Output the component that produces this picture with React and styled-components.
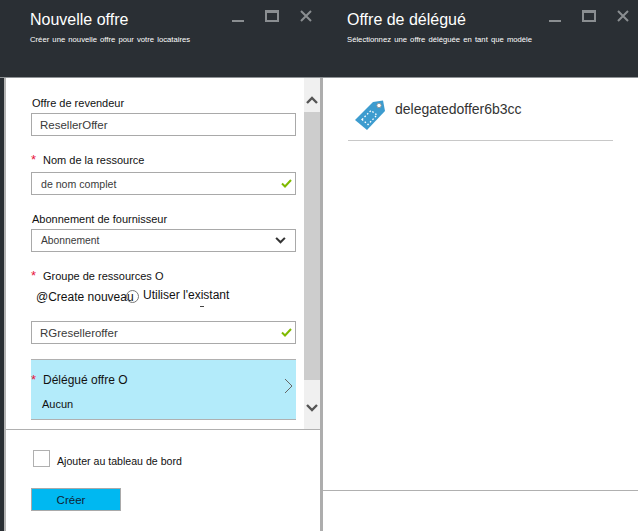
import styled, { createGlobalStyle } from "styled-components";

const GlobalStyle = createGlobalStyle`
  html, body {
    margin: 0;
    padding: 0;
    background: #fff;
  }
  body {
    font-family: "Liberation Sans", Arial, sans-serif;
    color: #222;
  }
`;

const Page = styled.div`
  display: grid;
  grid-template-columns: 322px 316px;
  width: 638px;
  height: 531px;
  overflow: hidden;
`;

const Blade = styled.section`
  display: flex;
  flex-direction: column;
  height: 531px;
  min-width: 0;
  background: ${({ $edge }) => $edge || "#fff"};
`;

const Header = styled.header`
  position: relative;
  height: 78px;
  flex-shrink: 0;
  box-sizing: border-box;
  padding: ${({ $pad }) => $pad};
  background: #2a2f34;
  border-bottom: 1px solid #8f9396;
  color: #fff;
`;

const Title = styled.h1`
  margin: 0;
  font-size: 16px;
  line-height: 24px;
  font-weight: 400;
`;

const Subtitle = styled.p`
  margin: 2px 0 0;
  font-size: 7.7px;
  line-height: 12px;
  word-spacing: 1px;
`;

const WindowIcons = styled.div`
  position: absolute;
  top: 10px;
  right: ${({ $right }) => $right}px;
  display: flex;
  gap: 21px;
  align-items: flex-start;
`;

const LeftBody = styled.div`
  flex: 1;
  display: flex;
  flex-direction: column;
  background: #fff;
  border-left: 2px solid #b4b4b4;
  border-right: 2px solid #adadad;
  margin-left: 4px;
  min-height: 0;
`;

const FormArea = styled.div`
  height: 352px;
  flex-shrink: 0;
  display: flex;
  border-bottom: 1px solid #b0b0b0;
  box-sizing: border-box;
`;

const Form = styled.div`
  flex: 1;
  padding: 16px 8px 0 25px;
  min-width: 0;
`;

const Field = styled.div`
  margin-bottom: ${({ $gap }) => $gap ?? 15}px;
`;

const Label = styled.label`
  display: block;
  font-size: 11px;
  line-height: 18px;
  height: ${({ $h }) => $h ?? 19}px;
  color: #111;
  padding-left: ${({ $required }) => ($required ? "12px" : "1px")};
  position: relative;
`;

const Star = styled.span`
  position: absolute;
  left: 0;
  top: 0;
  color: #e8173c;
  font-size: 13px;
`;

const InputBox = styled.div`
  height: 23px;
  box-sizing: border-box;
  border: 1px solid #a9a9a9;
  display: flex;
  align-items: center;
  justify-content: space-between;
  padding: 0 3px 0 ${({ $left }) => $left ?? 9}px;
  font-size: ${({ $size }) => $size ?? 11}px;
  color: #3a3a3a;
  background: #fff;
`;

const SelectArrow = styled.span`
  display: flex;
  margin-right: 6px;
`;

const RadioRow = styled.div`
  position: relative;
  height: 26px;
  margin: 0 0 9px 4px;
  font-size: 12px;
  color: #111;
  line-height: 16px;
`;

const RadioCircle = styled.span`
  position: absolute;
  left: 91px;
  top: 4px;
  width: 11px;
  height: 11px;
  border: 1px solid #777;
  border-radius: 50%;
`;

const RadioText = styled.span`
  position: absolute;
  left: ${({ $left }) => $left}px;
  top: ${({ $top }) => $top}px;
  white-space: nowrap;
`;

const Tick = styled.span`
  position: absolute;
  left: 165px;
  top: 20px;
  width: 4px;
  height: 1px;
  background: #444;
`;

const Picker = styled.div`
  height: 61px;
  box-sizing: border-box;
  margin-top: 15px;
  background: #b3ebfa;
  border-top: 1px solid #b0b0b0;
  border-bottom: 1px solid #b0b0b0;
  padding: 11px 0 0;
  position: relative;
  font-size: 11px;
  color: #111;
`;

const PickerLabel = styled.div`
  position: relative;
  padding-left: 12px;
  line-height: 18px;
  font-size: 12px;
`;

const PickerValue = styled.div`
  padding-left: 11px;
  margin-top: 6px;
  line-height: 18px;
`;

const PickerArrow = styled.span`
  position: absolute;
  right: 3px;
  top: 18px;
  display: flex;
`;

const Scrollbar = styled.div`
  width: 16px;
  background: #f0f0f0;
  display: flex;
  flex-direction: column;
  flex-shrink: 0;
`;

const ScrollButton = styled.div`
  height: ${({ $h }) => $h}px;
  box-sizing: border-box;
  padding-top: ${({ $top }) => $top}px;
  display: flex;
  align-items: center;
  justify-content: center;
`;

const ScrollThumb = styled.div`
  flex: 1;
  background: #cdcdcd;
`;

const Footer = styled.div`
  padding: 20px 0 0 25px;
`;

const CheckRow = styled.div`
  display: flex;
  align-items: flex-start;
  gap: 7px;
  font-size: 10.6px;
  line-height: 14px;
  color: #111;
  margin-left: 2px;
`;

const CheckBox = styled.span`
  width: 17px;
  height: 17px;
  box-sizing: border-box;
  border: 1px solid #b0b0b0;
  background: #fff;
`;

const CheckText = styled.span`
  padding-top: 4px;
`;

const Button = styled.button`
  display: block;
  margin-top: 20px;
  width: 90px;
  height: 23px;
  padding: 0 10px 0 0;
  border: 1px solid #a9a9a9;
  background: #00b8f1;
  color: #123;
  font: inherit;
  font-size: 11.5px;
`;

const RightBody = styled.div`
  flex: 1;
  display: flex;
  flex-direction: column;
  border-left: 1px solid #adadad;
`;

const ListArea = styled.div`
  height: 412px;
  flex-shrink: 0;
  padding: 0 25px;
  border-bottom: 1px solid #b0b0b0;
`;

const OfferRow = styled.div`
  height: 63px;
  display: flex;
  align-items: flex-start;
  gap: 9px;
  padding: 21px 0 0 6px;
  box-sizing: border-box;
  border-bottom: 1px solid #c8c8c8;
  font-size: 14px;
  color: #333;
`;

const OfferName = styled.span`
  line-height: 20px;
`;

const Minimize = () => (
  <svg width="12" height="12" viewBox="0 0 12 12">
    <rect x="0" y="10" width="12" height="2" fill="#8a8e91" />
  </svg>
);

const Maximize = () => (
  <svg width="14" height="12" viewBox="0 0 14 12">
    <rect x="1" y="1" width="12" height="10" fill="none" stroke="#8a8e91" strokeWidth="2" />
    <rect x="1" y="1" width="12" height="2" fill="#8a8e91" />
  </svg>
);

const Close = () => (
  <svg width="12" height="12" viewBox="0 0 12 12">
    <path d="M1 1 L11 11 M11 1 L1 11" stroke="#8a8e91" strokeWidth="2" />
  </svg>
);

const Check = () => (
  <svg width="11" height="9" viewBox="0 0 11 9">
    <path d="M1 4.5 L4 7.5 L10 1" fill="none" stroke="#7fba00" strokeWidth="2" />
  </svg>
);

const Chevron = ({ up, color = "#555", w = 12, h = 8 }) => (
  <svg width={w} height={h} viewBox="0 0 12 8">
    <path
      d={up ? "M1 7 L6 2 L11 7" : "M1 1 L6 6 L11 1"}
      fill="none"
      stroke={color}
      strokeWidth="2.4"
    />
  </svg>
);

const TagIcon = () => (
  <svg width="32" height="32" viewBox="0 0 32 32">
    <path d="M1 21 L19 3 L29 1.5 L31 12 L13 31 Z" fill="#3d9ccf" />
    <circle cx="25" cy="6.5" r="2.2" fill="#fff" stroke="#8a8a8a" strokeWidth="0.8" />
    <path
      d="M8 20.5 L17 11.5 L23 16 L14 25.5 Z"
      fill="none"
      stroke="#fff"
      strokeWidth="1.3"
      strokeDasharray="1.6 2"
    />
  </svg>
);

const WindowButtons = ({ right }) => (
  <WindowIcons $right={right}>
    <Minimize />
    <Maximize />
    <Close />
  </WindowIcons>
);

export default function App() {
  return (
    <Page>
      <GlobalStyle />
      <Blade $edge="#2a2f34">
        <Header $pad="8px 0 0 30px">
          <Title>Nouvelle offre</Title>
          <Subtitle>Créer une nouvelle offre pour votre locataires</Subtitle>
          <WindowButtons right={10} />
        </Header>
        <LeftBody>
          <FormArea>
            <Form>
              <Field>
                <Label>Offre de revendeur</Label>
                <InputBox $size={11.5} $left={8}>ResellerOffer</InputBox>
              </Field>
              <Field>
                <Label $required $h={21}>
                  <Star>*</Star>Nom de la ressource
                </Label>
                <InputBox $size={10.6}>
                  de nom complet
                  <Check />
                </InputBox>
              </Field>
              <Field>
                <Label>Abonnement de fournisseur</Label>
                <InputBox $size={10.3}>
                  Abonnement
                  <SelectArrow>
                    <Chevron color="#333" w={11} h={7} />
                  </SelectArrow>
                </InputBox>
              </Field>
              <Field $gap={0}>
                <Label $required>
                  <Star>*</Star>Groupe de ressources O
                </Label>
              </Field>
              <RadioRow>
                <RadioText $left={1} $top={3}>@Create nouveau</RadioText>
                <RadioCircle />
                <RadioText $left={108} $top={1}>Utiliser l'existant</RadioText>
                <Tick />
              </RadioRow>
              <InputBox $size={11.5} $left={8}>
                RGreselleroffer
                <Check />
              </InputBox>
              <Picker>
                <PickerLabel>
                  <Star>*</Star>Délégué offre O
                </PickerLabel>
                <PickerValue>Aucun</PickerValue>
                <PickerArrow>
                  <svg width="9" height="16" viewBox="0 0 9 16">
                    <path d="M1 1 L8 8 L1 15" fill="none" stroke="#666" strokeWidth="1" />
                  </svg>
                </PickerArrow>
              </Picker>
            </Form>
            <Scrollbar>
              <ScrollButton $h={34} $top={10}>
                <Chevron up />
              </ScrollButton>
              <ScrollThumb />
              <ScrollButton $h={49} $top={6}>
                <Chevron />
              </ScrollButton>
            </Scrollbar>
          </FormArea>
          <Footer>
            <CheckRow>
              <CheckBox />
              <CheckText>Ajouter au tableau de bord</CheckText>
            </CheckRow>
            <Button>Créer</Button>
          </Footer>
        </LeftBody>
      </Blade>
      <Blade>
        <Header $pad="8px 0 0 25px">
          <Title>Offre de délégué</Title>
          <Subtitle>Sélectionnez une offre déléguée en tant que modèle</Subtitle>
          <WindowButtons right={9} />
        </Header>
        <RightBody>
          <ListArea>
            <OfferRow>
              <TagIcon />
              <OfferName>delegatedoffer6b3cc</OfferName>
            </OfferRow>
          </ListArea>
        </RightBody>
      </Blade>
    </Page>
  );
}
